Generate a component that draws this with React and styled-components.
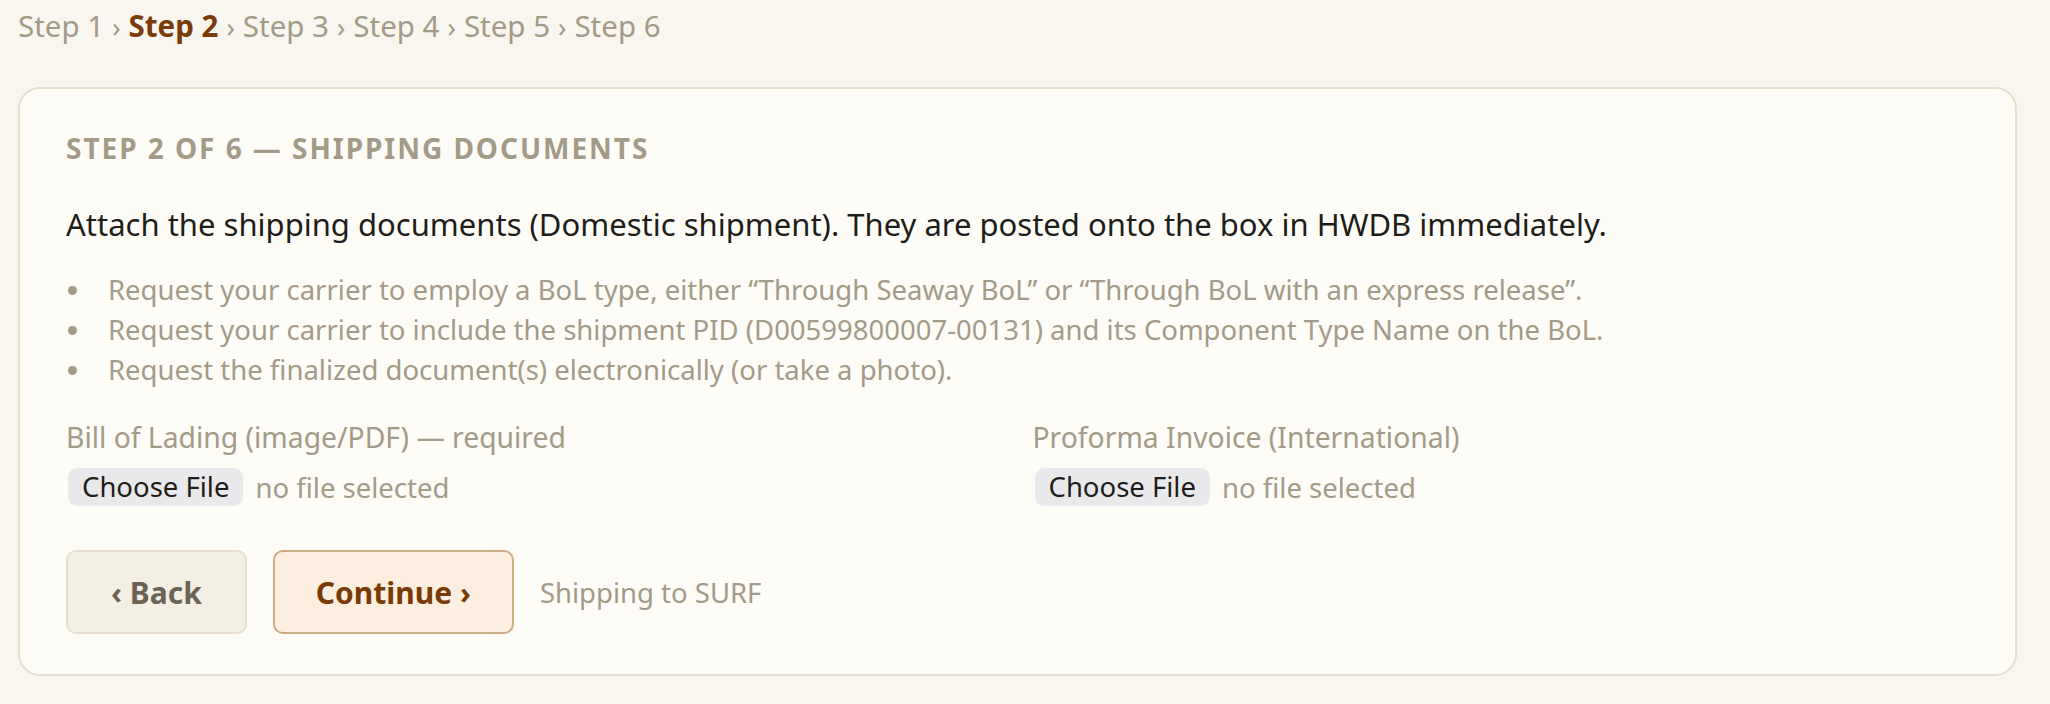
import React from 'react';
import styled, { createGlobalStyle } from 'styled-components';

const GlobalStyle = createGlobalStyle`
  html, body {
    margin: 0;
    padding: 0;
    background: #f9f6ef;
  }
  body {
    font-family: "Noto Sans", "Liberation Sans", sans-serif;
    color: #1f1d1a;
  }
`;

const Page = styled.div`
  padding: 6px 33px 20px 18px;
`;

const Crumbs = styled.nav`
  display: flex;
  align-items: baseline;
  gap: 8px;
  font-size: 29.5px;
  line-height: 40px;
  color: #a39a88;
`;

const Crumb = styled.span`
  color: ${props => props.active ? '#7a3b0a' : '#a39a88'};
  font-weight: ${props => props.active ? 700 : 400};
`;

const Sep = styled.span`
  font-size: 27px;
`;

const Card = styled.section`
  margin-top: 40px;
  background: #fdfcf7;
  border: 2px solid #e5dfcd;
  border-radius: 22px;
  padding: 41px 48px 40px 46px;
`;

const Heading = styled.h2`
  margin: 0;
  font-size: 28px;
  font-weight: 700;
  letter-spacing: 0.07em;
  text-transform: uppercase;
  color: #a39a88;
  line-height: 36px;
`;

const Lead = styled.p`
  margin: 37px 0 0;
  font-size: 31px;
  line-height: 42px;
  color: #1f1d1a;
`;

const Notes = styled.ul`
  margin: 25px 0 0;
  padding: 0;
  list-style: none;
  color: #a39a88;
  font-size: 27.5px;
  line-height: 40px;
`;

const Note = styled.li`
  display: flex;
  align-items: center;

  &::before {
    content: '';
    flex: none;
    width: 9px;
    height: 9px;
    margin: 0 31px 0 2px;
    border-radius: 50%;
    background: #a39a88;
  }
`;

const Uploads = styled.div`
  display: grid;
  grid-template-columns: 1fr 1fr;
  column-gap: 32px;
  margin-top: 27px;
`;

const Field = styled.div`
  display: flex;
  flex-direction: column;
  gap: 11px;
`;

const Label = styled.label`
  font-size: 28.3px;
  line-height: 40px;
  color: #a39a88;
`;

const FileRow = styled.div`
  display: flex;
  align-items: center;
  gap: 12px;
  padding-left: 2px;
`;

const FileButton = styled.button`
  height: 38px;
  padding: 0 14px;
  border: none;
  border-radius: 9px;
  background: #e9e9ec;
  color: #1f1d1a;
  font-family: inherit;
  font-size: 27.5px;
  line-height: 38px;
`;

const FileName = styled.span`
  font-size: 27.5px;
  color: #a39a88;
`;

const Actions = styled.div`
  display: flex;
  align-items: center;
  gap: 26px;
  margin-top: 44px;
`;

const Button = styled.button`
  height: 84px;
  padding: 0 ${props => props.primary ? '41px' : '43px'};
  border-radius: 10px;
  border: 2px solid ${props => props.primary ? '#cdae84' : '#e6dfce'};
  background: ${props => props.primary ? '#fdefdf' : '#f3efe5'};
  color: ${props => props.primary ? '#7a3a06' : '#6b6354'};
  font-family: inherit;
  font-size: 30px;
  font-weight: 700;
`;

const Hint = styled.span`
  font-size: 27.5px;
  color: #a39a88;
`;

const steps = ['Step 1', 'Step 2', 'Step 3', 'Step 4', 'Step 5', 'Step 6'];

const App = () => {
  return (
    <>
      <GlobalStyle />
      <Page>
        <Crumbs>
          {steps.map((s, i) => (
            <React.Fragment key={s}>
              {i > 0 && <Sep>›</Sep>}
              <Crumb active={i === 1}>{s}</Crumb>
            </React.Fragment>
          ))}
        </Crumbs>

        <Card>
          <Heading>Step 2 of 6 — Shipping documents</Heading>
          <Lead>
            Attach the shipping documents (Domestic shipment). They are posted onto the box in HWDB immediately.
          </Lead>
          <Notes>
            <Note>Request your carrier to employ a BoL type, either “Through Seaway BoL” or “Through BoL with an express release”.</Note>
            <Note>Request your carrier to include the shipment PID (D00599800007-00131) and its Component Type Name on the BoL.</Note>
            <Note>Request the finalized document(s) electronically (or take a photo).</Note>
          </Notes>

          <Uploads>
            <Field>
              <Label>Bill of Lading (image/PDF) — required</Label>
              <FileRow>
                <FileButton>Choose File</FileButton>
                <FileName>no file selected</FileName>
              </FileRow>
            </Field>
            <Field>
              <Label>Proforma Invoice (International)</Label>
              <FileRow>
                <FileButton>Choose File</FileButton>
                <FileName>no file selected</FileName>
              </FileRow>
            </Field>
          </Uploads>

          <Actions>
            <Button>‹ Back</Button>
            <Button primary>Continue ›</Button>
            <Hint>Shipping to SURF</Hint>
          </Actions>
        </Card>
      </Page>
    </>
  );
};

export default App;
